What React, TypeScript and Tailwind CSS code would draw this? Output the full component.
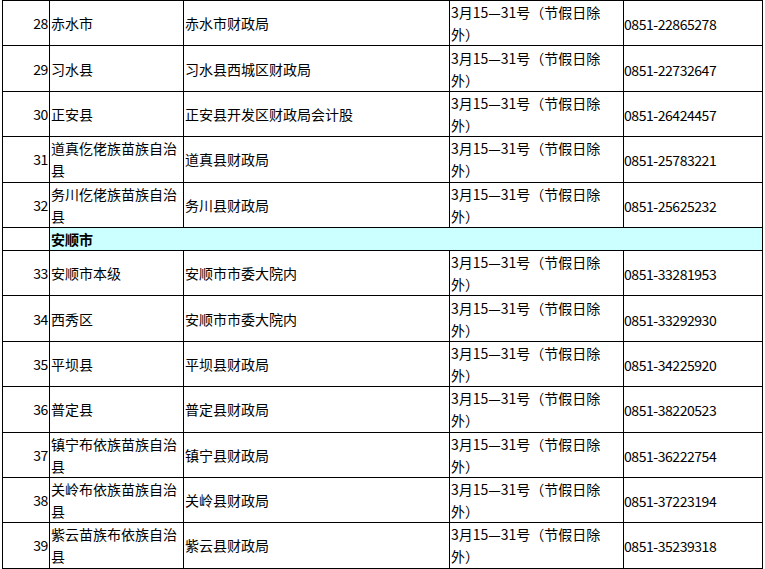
import React from "react";

type Row = { no: number; name: string[]; office: string; phone: string };

const date = ["3月15—31号（节假日除", "外）"];

const zunyi: Row[] = [
  { no: 28, name: ["赤水市"], office: "赤水市财政局", phone: "0851-22865278" },
  { no: 29, name: ["习水县"], office: "习水县西城区财政局", phone: "0851-22732647" },
  { no: 30, name: ["正安县"], office: "正安县开发区财政局会计股", phone: "0851-26424457" },
  { no: 31, name: ["道真仡佬族苗族自治", "县"], office: "道真县财政局", phone: "0851-25783221" },
  { no: 32, name: ["务川仡佬族苗族自治", "县"], office: "务川县财政局", phone: "0851-25625232" },
];

const anshun: Row[] = [
  { no: 33, name: ["安顺市本级"], office: "安顺市市委大院内", phone: "0851-33281953" },
  { no: 34, name: ["西秀区"], office: "安顺市市委大院内", phone: "0851-33292930" },
  { no: 35, name: ["平坝县"], office: "平坝县财政局", phone: "0851-34225920" },
  { no: 36, name: ["普定县"], office: "普定县财政局", phone: "0851-38220523" },
  { no: 37, name: ["镇宁布依族苗族自治", "县"], office: "镇宁县财政局", phone: "0851-36222754" },
  { no: 38, name: ["关岭布依族苗族自治", "县"], office: "关岭县财政局", phone: "0851-37223194" },
  { no: 39, name: ["紫云苗族布依族自治", "县"], office: "紫云县财政局", phone: "0851-35239318" },
];

function Lines({ lines }: { lines: string[] }) {
  return (
    <>
      {lines.map((l, i) => (
        <React.Fragment key={i}>
          {i > 0 && <br />}
          {l}
        </React.Fragment>
      ))}
    </>
  );
}

function DataRow({ row }: { row: Row }) {
  return (
    <tr className="h-[45.4px]">
      <td className="border border-black px-[1px] text-right align-middle tracking-[-0.4px]">{row.no}</td>
      <td className="border border-black px-[1px] align-middle whitespace-nowrap">
        <Lines lines={row.name} />
      </td>
      <td className="border border-black px-[1px] align-middle whitespace-nowrap">{row.office}</td>
      <td className="border border-black px-[1px] align-middle whitespace-nowrap">
        <Lines lines={date} />
      </td>
      <td className="border border-black pl-0 pr-[1px] pt-[2px] align-middle whitespace-nowrap tracking-[-0.45px]">
        {row.phone}
      </td>
    </tr>
  );
}

function CityRow({ name }: { name?: string }) {
  return (
    <tr className="h-[22px]">
      <td className="border border-black"></td>
      <td colSpan={4} className="border border-black bg-[#ccffff] px-[1px] font-bold align-middle">
        {name}
      </td>
    </tr>
  );
}

export default function App() {
  return (
    <div className="bg-white min-h-screen pl-[2px] text-black">
      <table
        className="table-fixed border-collapse w-[760px] text-[14px] leading-[22px]"
        style={{ fontFamily: '"Noto Sans CJK SC", "Noto Sans", sans-serif' }}
      >
        <colgroup>
          <col className="w-[47px]" />
          <col className="w-[134px]" />
          <col className="w-[266px]" />
          <col className="w-[174px]" />
          <col className="w-[139px]" />
        </colgroup>
        <tbody>
          {zunyi.map((r) => (
            <DataRow key={r.no} row={r} />
          ))}
          <CityRow name="安顺市" />
          {anshun.map((r) => (
            <DataRow key={r.no} row={r} />
          ))}
          {/* next city header starts just below the fold */}
          <CityRow />
        </tbody>
      </table>
    </div>
  );
}
